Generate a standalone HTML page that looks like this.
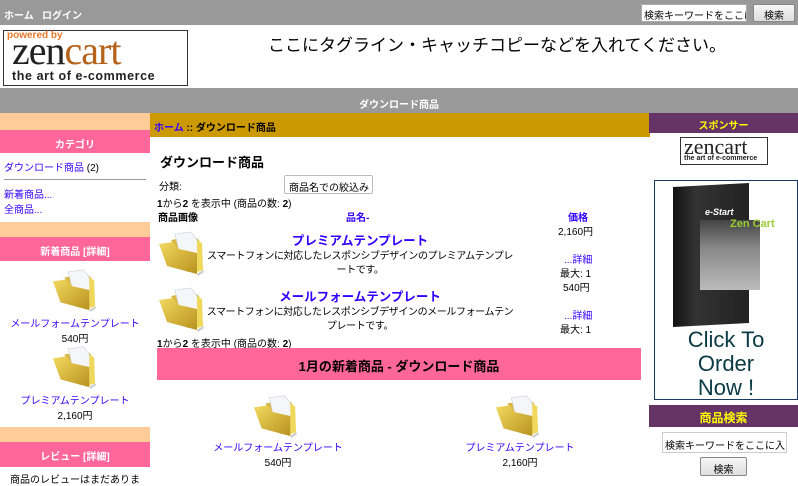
<!DOCTYPE html>
<html><head><meta charset="utf-8">
<style>
*{margin:0;padding:0;box-sizing:border-box}
body{width:798px;height:483px;overflow:hidden;background:#fff;font-family:"Liberation Sans","Noto Sans CJK JP",sans-serif;font-size:10px;color:#000;position:relative}
.a{position:absolute;white-space:nowrap}
.c{text-align:center}
.b{font-weight:bold}
.lk{color:#3300ff}
.ph{background:#ff6699;color:#fff;font-weight:bold;text-align:center}
.pu{background:#663366;color:#ffff00;font-weight:bold;text-align:center}
.pe{background:#ffcc99}
</style></head><body>
<svg width="0" height="0" style="position:absolute"><defs>
<linearGradient id="g2" x1="0" y1="0" x2="1" y2="1"><stop offset="0" stop-color="#f3d960"/><stop offset="1" stop-color="#b8921e"/></linearGradient>
<symbol id="f" viewBox="0 0 48 48">
<path d="M14 12 L36 8 L42 12 L44 40 L30 44 Z" fill="#d9b847"/>
<path d="M18 6 L34 4 L40 12 L42 38 L26 40 Z" fill="#f4f6fa" stroke="#c8d0da" stroke-width=".6"/>
<path d="M40 12 L45 15 L46 42 L40 44 Z" fill="#f0d85a"/>
<path d="M2 16 L16 14 L22 21 L40 25 L40 46 L10 38 Z" fill="url(#g2)"/>
<path d="M40 46 L46 42 L47 44 L41 48Z" fill="#ccc"/>
</symbol></defs></svg>

<div class="a" style="left:0;top:0;width:798px;height:25px;background:#999"></div>
<div class="a b" style="left:4px;top:7px;color:#fff;font-size:10px">ホーム&nbsp;&nbsp;&nbsp;ログイン</div>
<div class="a" style="left:641px;top:4px;width:106px;height:18px;background:#fff;border:1px solid #aaa;font-size:10px;padding:2px 2px;overflow:hidden">検索キーワードをここに</div>
<div class="a c" style="left:753px;top:4px;width:42px;height:18px;background:linear-gradient(#f6f6f6,#ddd);border:1px solid #888;border-radius:2px;font-size:10px;padding-top:2px">検索</div>

<div class="a" style="left:3px;top:30px;width:185px;height:56px;border:1px solid #333;background:#fff"></div>
<div class="a" style="left:7px;top:30px;color:#e8782a;font-weight:bold;font-size:10px">powered by</div>
<div class="a" style="left:12px;top:33px;font-family:'Liberation Serif',serif;font-size:40px;line-height:36px;letter-spacing:-1px"><span style="color:#222">zen</span><span style="color:#b5621b">cart</span></div>
<div class="a b" style="left:12px;top:69px;font-size:12.5px;color:#222;letter-spacing:.6px">the art of e-commerce</div>
<div class="a" style="left:268px;top:31px;font-size:17px">ここにタグライン・キャッチコピーなどを入れてください。</div>

<div class="a" style="left:0;top:88px;width:798px;height:25px;background:#999"></div>
<div class="a b c" style="left:0;top:96px;width:798px;color:#fff;font-size:10px">ダウンロード商品</div>

<div class="a pe" style="left:0;top:113px;width:150px;height:17px"></div>
<div class="a ph" style="left:0;top:130px;width:150px;height:23px;padding-top:6px">カテゴリ</div>
<div class="a lk" style="left:4px;top:159px">ダウンロード商品 <span style="color:#000">(2)</span></div>
<div class="a" style="left:4px;top:179px;width:142px;height:1px;background:#999"></div>
<div class="a lk" style="left:4px;top:186px">新着商品...</div>
<div class="a lk" style="left:4px;top:201px">全商品...</div>
<div class="a pe" style="left:0;top:222px;width:150px;height:15px"></div>
<div class="a ph" style="left:0;top:237px;width:150px;height:24px;padding-top:6px">新着商品 [詳細]</div>
<svg class="a" style="left:51px;top:266px" width="46" height="46"><use href="#f"/></svg>
<div class="a c lk" style="left:0;top:315px;width:150px">メールフォームテンプレート</div>
<div class="a c" style="left:0;top:330px;width:150px">540円</div>
<svg class="a" style="left:51px;top:343px" width="46" height="46"><use href="#f"/></svg>
<div class="a c lk" style="left:0;top:392px;width:150px">プレミアムテンプレート</div>
<div class="a c" style="left:0;top:407px;width:150px">2,160円</div>
<div class="a pe" style="left:0;top:427px;width:150px;height:15px"></div>
<div class="a ph" style="left:0;top:442px;width:150px;height:25px;padding-top:6px">レビュー [詳細]</div>
<div class="a c" style="left:0;top:471px;width:150px">商品のレビューはまだありま</div>

<div class="a b" style="left:150px;top:113px;width:500px;height:24px;background:#cc9900;padding:6px 0 0 4px"><span class="lk">ホーム</span> :: ダウンロード商品</div>
<div class="a b" style="left:160px;top:152px;font-size:13px">ダウンロード商品</div>
<div class="a" style="left:159px;top:178px">分類:</div>
<div class="a" style="left:284px;top:175px;width:89px;height:19px;border:1px solid #bbb;border-radius:2px;padding:3px 4px;font-size:10px;overflow:hidden">商品名での絞込み</div>
<div class="a" style="left:157px;top:195px"><b>1</b>から<b>2</b> を表示中 (商品の数: <b>2</b>)</div>
<div class="a b" style="left:158px;top:209px">商品画像</div>
<div class="a b lk" style="left:346px;top:209px">品名-</div>
<div class="a b lk" style="left:568px;top:209px">価格</div>
<div class="a" style="left:558px;top:223px">2,160円</div>
<svg class="a" style="left:157px;top:228px" width="48" height="48"><use href="#f"/></svg>
<div class="a b c lk" style="left:205px;top:230px;width:310px;font-size:12.5px">プレミアムテンプレート</div>
<div class="a c" style="left:205px;top:250px;width:310px;line-height:14px;white-space:normal;letter-spacing:-0.4px">スマートフォンに対応したレスポンシブデザインのプレミアムテンプレートです。</div>
<div class="a lk" style="left:564px;top:251px">...詳細</div>
<div class="a" style="left:560px;top:265px">最大: 1</div>
<div class="a" style="left:563px;top:279px">540円</div>
<svg class="a" style="left:157px;top:284px" width="48" height="48"><use href="#f"/></svg>
<div class="a b c lk" style="left:205px;top:286px;width:310px;font-size:12.5px">メールフォームテンプレート</div>
<div class="a c" style="left:205px;top:306px;width:310px;line-height:14px;white-space:normal;letter-spacing:-0.4px">スマートフォンに対応したレスポンシブデザインのメールフォームテンプレートです。</div>
<div class="a lk" style="left:564px;top:307px">...詳細</div>
<div class="a" style="left:560px;top:321px">最大: 1</div>
<div class="a" style="left:157px;top:335px"><b>1</b>から<b>2</b> を表示中 (商品の数: <b>2</b>)</div>
<div class="a b c" style="left:157px;top:348px;width:484px;height:32px;background:#ff6699;font-size:13px;padding-top:8px">1月の新着商品 - ダウンロード商品</div>
<svg class="a" style="left:252px;top:392px" width="46" height="46"><use href="#f"/></svg>
<div class="a c lk" style="left:178px;top:439px;width:200px">メールフォームテンプレート</div>
<div class="a c" style="left:178px;top:454px;width:200px">540円</div>
<svg class="a" style="left:494px;top:392px" width="46" height="46"><use href="#f"/></svg>
<div class="a c lk" style="left:420px;top:439px;width:200px">プレミアムテンプレート</div>
<div class="a c" style="left:420px;top:454px;width:200px">2,160円</div>

<div class="a pu" style="left:649px;top:113px;width:149px;height:20px;padding-top:4px">スポンサー</div>
<div class="a" style="left:680px;top:137px;width:88px;height:28px;border:1px solid #333"></div>
<div class="a" style="left:684px;top:135px;font-family:'Liberation Serif',serif;font-size:22px;line-height:24px;color:#222">zencart</div>
<div class="a b" style="left:684px;top:155px;font-size:7px;color:#222">the art of e-commerce</div>
<div class="a" style="left:654px;top:180px;width:144px;height:220px;border:1px solid #1a3a60;background:#fff"></div>
<div class="a" style="left:673px;top:185px;width:76px;height:140px;background:linear-gradient(90deg,#111,#333 30%,#222);transform:skewY(-3deg)"></div>
<div class="a" style="left:700px;top:220px;width:60px;height:70px;background:linear-gradient(#444,#888 40%,#bbb)"></div>
<div class="a b" style="left:705px;top:207px;color:#fff;font-size:9px;font-style:italic">e-Start</div>
<div class="a b" style="left:730px;top:218px;color:#9c3;font-size:11px">Zen Cart</div>
<div class="a c" style="left:654px;top:328px;width:144px;font-size:22px;line-height:24px;color:#0a3a44">Click To<br>Order<br>Now !</div>
<div class="a pu" style="left:649px;top:405px;width:149px;height:22px;padding-top:4px;font-size:12px">商品検索</div>
<div class="a" style="left:662px;top:432px;width:125px;height:21px;border:1px solid #ccc;padding:4px 2px;font-size:10px;overflow:hidden">検索キーワードをここに入</div>
<div class="a c" style="left:700px;top:457px;width:47px;height:19px;border:1px solid #888;border-radius:2px;background:linear-gradient(#f6f6f6,#ddd);padding-top:3px;font-size:10px">検索</div>
</body></html>
